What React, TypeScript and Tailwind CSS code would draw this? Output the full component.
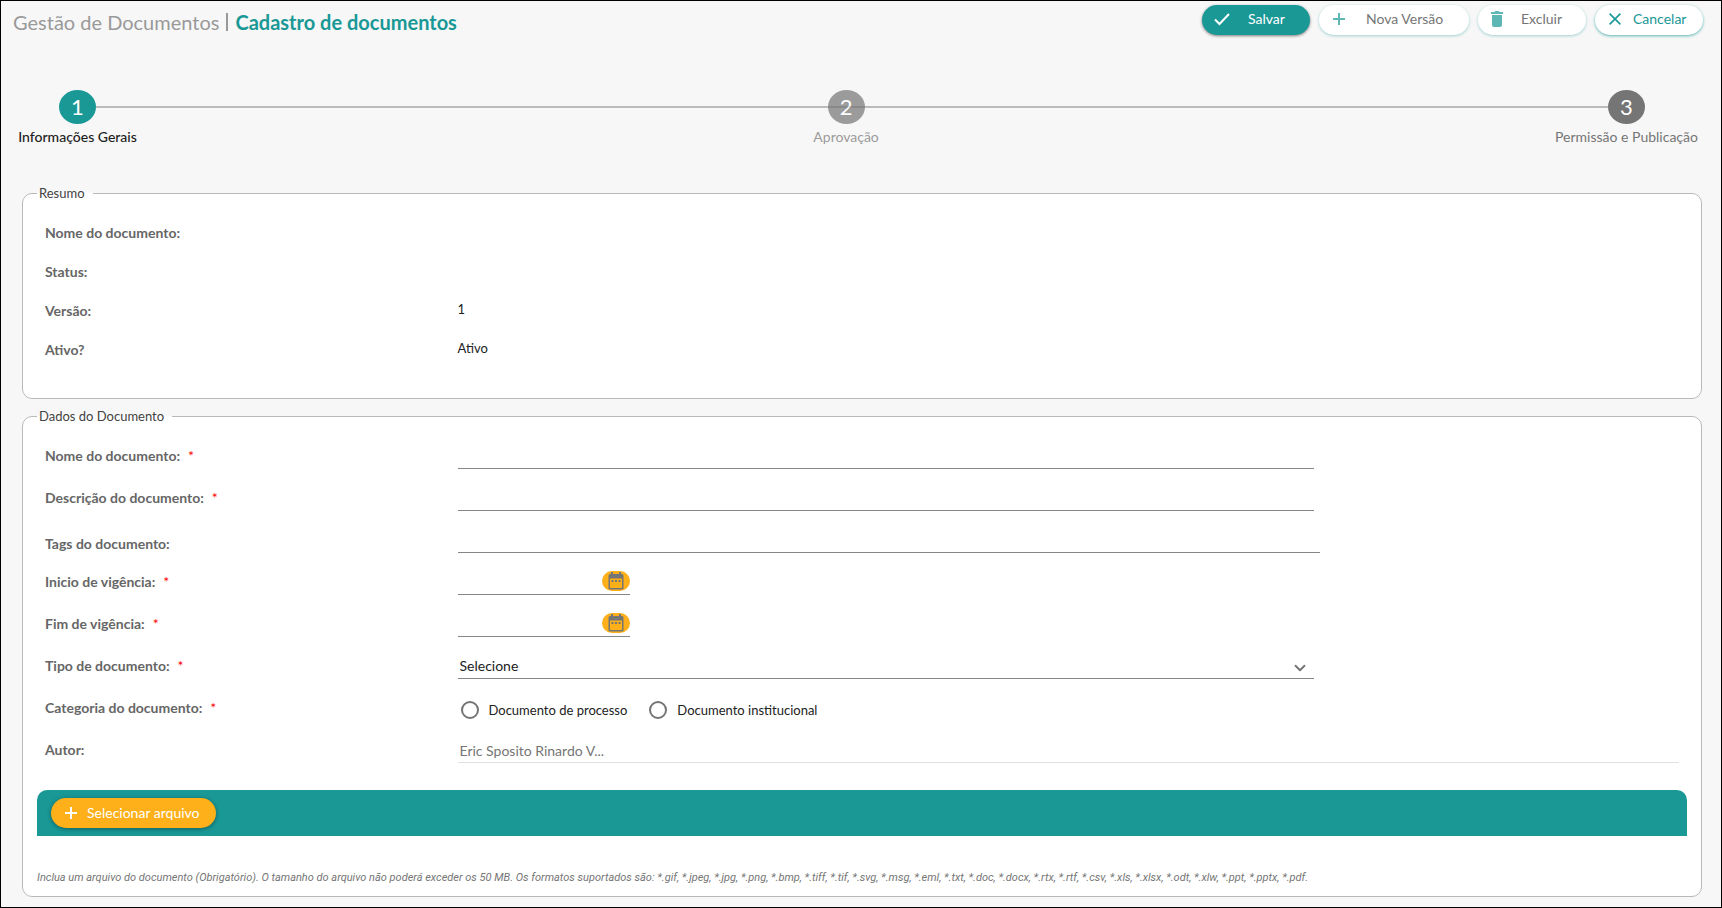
import React, { useState } from 'react';
import { ChevronDown } from 'lucide-react';

const PlusIcon = () => (
  <svg width="14" height="14" viewBox="0 0 14 14" fill="none" stroke="currentColor" strokeWidth="2" aria-hidden="true">
    <path d="M7 1v12M1 7h12" />
  </svg>
);

const CheckIcon = () => (
  <svg width="16" height="14" viewBox="0 0 16 14" fill="none" stroke="currentColor" strokeWidth="2" aria-hidden="true">
    <path d="M1 7.5l4.5 4.5L15 2" />
  </svg>
);

const TrashIcon = () => (
  <svg width="12" height="16" viewBox="0 0 12 16" fill="currentColor" aria-hidden="true">
    <path d="M0 1h3.5l1-1h3l1 1H12v2H0zM1 4h10v10a2 2 0 0 1-2 2H3a2 2 0 0 1-2-2z" />
  </svg>
);

const CloseIcon = () => (
  <svg width="12" height="12" viewBox="0 0 12 12" fill="none" stroke="currentColor" strokeWidth="1.6" aria-hidden="true">
    <path d="M.6.6l10.800 10.800M11.400.6L.6 11.400" />
  </svg>
);

const CalendarIcon = () => (
  <svg width="16" height="18" viewBox="0 0 16 18" fill="#757575" aria-hidden="true">
    <path d="M3 0h2v2h6V0h2v2h1a1.500 1.500 0 0 1 1.500 1.500V16a1.500 1.500 0 0 1-1.500 1.500H2A1.500 1.500 0 0 1 .5 16V3.500A1.500 1.500 0 0 1 2 2h1zM2 6.500V16h12V6.500z" fillRule="evenodd" />
    <path d="M3.500 8h2v2h-2zM7 8h2v2H7zM10.500 8h2v2h-2z" />
  </svg>
);

const summary = [
  { label: 'Nome do documento:', value: '' },
  { label: 'Status:', value: '' },
  { label: 'Versão:', value: '1' },
  { label: 'Ativo?', value: 'Ativo' },
];

const lineInput = 'block h-7 border-b border-[#868686] bg-transparent px-[2px] outline-none focus:border-[#199896]';

interface RowProps {
  label: string;
  htmlFor?: string;
  required?: boolean;
  low?: boolean;
  children: React.ReactNode;
}

function Row({ label, htmlFor, required, low, children }: RowProps) {
  return (
    <div className="flex h-[42px] items-end">
      <label htmlFor={htmlFor} className={`w-1/4 shrink-0 font-bold text-[#666] ${low ? '' : 'pb-1'}`}>
        {label}
        {required && <span className="ml-2 font-normal text-[#f00]">*</span>}
      </label>
      <div className="min-w-0 flex-1">{children}</div>
    </div>
  );
}

function DateField({ id }: { id: string }) {
  return (
    <div className="flex h-7 w-[172px] items-center border-b border-[#868686]">
      <input id={id} type="text" className="min-w-0 flex-1 bg-transparent px-[2px] outline-none" />
      <button type="button" aria-label="Abrir calendário" className="flex h-5 w-7 items-center justify-center rounded-[10px] bg-[#fdb01a]">
        <CalendarIcon />
      </button>
    </div>
  );
}

export default function App() {
  const [category, setCategory] = useState('');

  return (
    <div className="min-h-screen border border-black bg-[#f7f7f7] pb-[10px] font-['Lato',sans-serif] text-[14px] leading-[18px] text-[#212121]">
      <header className="flex items-start justify-between pt-1 pr-[18px] pl-3">
        <h1 className="flex items-center gap-[7px] pt-1 text-[20px] leading-[26px] text-[#999]">
          <span>Gestão de Documentos</span>
          <span className="h-[18px] w-[2px] bg-[#999]" />
          <span className="font-bold text-[#199896]">Cadastro de documentos</span>
        </h1>
        <div className="flex gap-[9px]">
          <button type="button" className="flex h-[30px] w-[108px] items-center gap-[18px] rounded-full bg-[#199896] pb-[2px] pl-3 text-white shadow-[0_1px_3px_rgba(0,0,0,0.5)]">
            <CheckIcon />
            Salvar
          </button>
          <button type="button" className="flex h-[30px] w-[150px] items-center gap-5 rounded-full bg-white pb-[2px] pl-[13px] text-[#757575] shadow-[0_1px_3px_rgba(25,152,150,0.4)]">
            <span className="text-[#5eb7b5]"><PlusIcon /></span>
            Nova Versão
          </button>
          <button type="button" className="flex h-[30px] w-[108px] items-center gap-[18px] rounded-full bg-white pb-[2px] pl-[13px] text-[#757575] shadow-[0_1px_3px_rgba(25,152,150,0.4)]">
            <span className="text-[#5eb7b5]"><TrashIcon /></span>
            Excluir
          </button>
          <button type="button" className="flex h-[30px] w-[108px] items-center gap-3 rounded-full bg-white pb-[2px] pl-[14px] text-[#199896] shadow-[0_1px_3px_rgba(25,152,150,0.7)]">
            <CloseIcon />
            Cancelar
          </button>
        </div>
      </header>

      <nav aria-label="Etapas" className="mt-[55px] flex items-start pr-[76px] pl-[58px]">
        <button type="button" className="flex w-[37px] flex-col items-center gap-1 whitespace-nowrap">
          <span className="flex h-[34px] w-[37px] items-center justify-center rounded-[50%] bg-[#199896] text-[22px] text-white">1</span>
          <span className="font-medium text-[#212121]">Informações Gerais</span>
        </button>
        <div className="mt-4 -mr-[19px] h-[2px] flex-[69] bg-[#bbb]" />
        <button type="button" className="flex w-[37px] flex-col items-center gap-1 whitespace-nowrap opacity-70">
          <span className="flex h-[34px] w-[37px] items-center justify-center rounded-[50%] bg-[#757575] text-[22px] text-white">2</span>
          <span className="text-[#757575]">Aprovação</span>
        </button>
        <div className="mt-4 -ml-[18px] h-[2px] flex-[70] bg-[#bbb]" />
        <button type="button" className="flex w-[37px] flex-col items-center gap-1 whitespace-nowrap">
          <span className="flex h-[34px] w-[37px] items-center justify-center rounded-[50%] bg-[#757575] text-[22px] text-white">3</span>
          <span className="text-[#757575]">Permissão e Publicação</span>
        </button>
      </nav>

      <main className="pr-[19px] pl-[21px]">
        <fieldset className="mt-[38px] rounded-[10px] border border-[#b9b9b9] bg-white px-[14px] pb-7">
          <legend className="pr-2 pl-[2px] text-[13px] text-[#424242]">Resumo</legend>
          <dl className="-mr-2 pt-3 pl-2">
            {summary.map((item) => (
              <div key={item.label} className="flex h-[39px] items-center">
                <dt className="w-1/4 pb-[2px] font-bold text-[#666]">{item.label}</dt>
                <dd className="pb-[6px] text-[13px]">{item.value}</dd>
              </div>
            ))}
          </dl>
        </fieldset>

        <fieldset className="mt-2 rounded-[10px] border border-[#b9b9b9] bg-white px-[14px] pb-[9px]">
          <legend className="pr-2 pl-[2px] text-[13px] text-[#424242]">Dados do Documento</legend>
          <div className="-mr-2 pt-[2px] pl-2">
            <Row label="Nome do documento:" htmlFor="nome" required>
              <input id="nome" type="text" className={`${lineInput} w-[calc(70%-10px)]`} />
            </Row>
            <Row label="Descrição do documento:" htmlFor="descricao" required>
              <input id="descricao" type="text" className={`${lineInput} w-[calc(70%-10px)]`} />
            </Row>
            <Row label="Tags do documento:" htmlFor="tags" low>
              <input id="tags" type="text" className={`${lineInput} w-[calc(70%-4px)]`} />
            </Row>
            <Row label="Inicio de vigência:" htmlFor="inicio" required>
              <DateField id="inicio" />
            </Row>
            <Row label="Fim de vigência:" htmlFor="fim" required>
              <DateField id="fim" />
            </Row>
            <Row label="Tipo de documento:" htmlFor="tipo" required>
              <div className="relative w-[calc(70%-10px)]">
                <select id="tipo" className={`${lineInput} w-full appearance-none pt-[2px]`}>
                  <option>Selecione</option>
                </select>
                <ChevronDown size={18} strokeWidth={2.5} className="pointer-events-none absolute top-2 right-[5px] text-[#757575]" />
              </div>
            </Row>
            <Row label="Categoria do documento:" required>
              <div className="flex gap-[22px] pb-[2px] pl-[3px] text-[13px]" role="radiogroup" aria-label="Categoria do documento">
                {['Documento de processo', 'Documento institucional'].map((option) => (
                  <label key={option} className="flex items-center gap-[10px]">
                    <input
                      type="radio"
                      name="categoria"
                      checked={category === option}
                      onChange={() => setCategory(option)}
                      className="h-[18px] w-[18px] appearance-none rounded-full border-2 border-[#757575] checked:border-[5px] checked:border-[#199896]"
                    />
                    {option}
                  </label>
                ))}
              </div>
            </Row>
            <Row label="Autor:" htmlFor="autor">
              <div className="pr-4">
                <input id="autor" type="text" disabled value="Eric Sposito Rinardo V..." className="block h-6 w-full border-b border-[#e0e0e0] bg-transparent px-[2px] text-[#757575]" />
              </div>
            </Row>
          </div>

          <div className="mt-[27px] flex h-[46px] items-center rounded-t-[10px] bg-[#199896] px-[14px]">
            <button type="button" className="flex h-[30px] w-[165px] items-center gap-[9px] rounded-full bg-[#fdb01a] pl-[13px] text-white shadow-[0_1px_4px_rgba(0,0,0,0.4)]">
              <PlusIcon />
              Selecionar arquivo
            </button>
          </div>
          <p className="mt-[33px] font-['Roboto',sans-serif] text-[11px] text-[#757575] italic">
            Inclua um arquivo do documento (Obrigatório). O tamanho do arquivo não poderá exceder os 50 MB. Os formatos suportados são: *.gif, *.jpeg, *.jpg, *.png, *.bmp, *.tiff, *.tif, *.svg, *.msg, *.eml, *.txt, *.doc, *.docx, *.rtx, *.rtf, *.csv, *.xls, *.xlsx, *.odt, *.xlw, *.ppt, *.pptx, *.pdf.
          </p>
        </fieldset>
      </main>
    </div>
  );
}
